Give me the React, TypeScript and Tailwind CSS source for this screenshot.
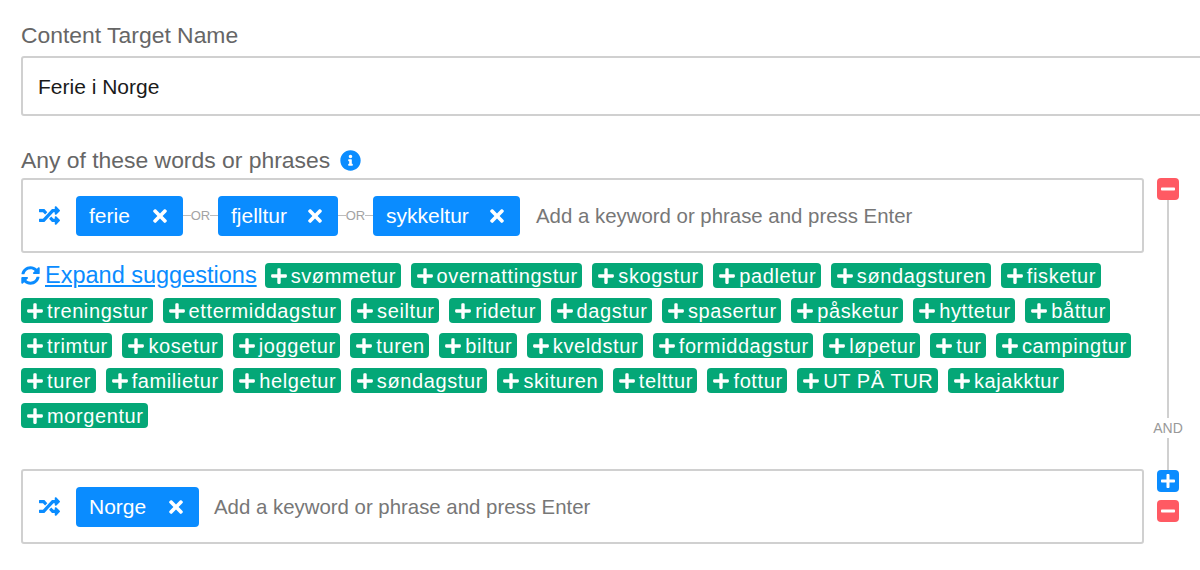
import { FaInfoCircle, FaMinus, FaPlus, FaRandom, FaSyncAlt, FaTimes } from "react-icons/fa";

const rows = [
  "svømmetur", "overnattingstur", "skogstur", "padletur", "søndagsturen", "fisketur",
  "treningstur", "ettermiddagstur", "seiltur", "ridetur", "dagstur", "spasertur", "påsketur", "hyttetur", "båttur",
  "trimtur", "kosetur", "joggetur", "turen", "biltur", "kveldstur", "formiddagstur", "løpetur", "tur", "campingtur",
  "turer", "familietur", "helgetur", "søndagstur", "skituren", "telttur", "fottur", "UT PÅ TUR", "kajakktur",
  "morgentur",
];

function Keyword({ text, width }: { text: string; width: string }) {
  return (
    <span className={`flex h-10 items-center justify-between rounded bg-[#0a8cff] pl-[13px] pr-[13px] text-[21px] text-white ${width}`}>
      {text}
      <FaTimes className="mt-[1px] h-[20px] w-[20px]" />
    </span>
  );
}

function Or() {
  return (
    <span className="flex w-[35px] items-center text-[13px] text-[#a3a3a3]">
      <span className="h-px flex-1 bg-[#bdbdbd]" />
      OR
      <span className="h-px flex-1 bg-[#bdbdbd]" />
    </span>
  );
}

function Suggestion({ text }: { text: string }) {
  return (
    <span className="flex h-[25px] items-center gap-[3px] rounded bg-[#04a777] pl-[5px] pr-[4.5px] text-[20px] tracking-[0.6px] text-white">
      <FaPlus className="h-[18px] w-[18px] shrink-0" />
      {text}
    </span>
  );
}

function RailButton({ kind }: { kind: "plus" | "minus" }) {
  return (
    <span className={`flex h-[22px] w-[22px] items-center justify-center rounded ${kind === "plus" ? "bg-[#0a8cff]" : "bg-[#ff5a63]"}`}>
      {kind === "plus" ? <FaPlus className="h-[16px] w-[16px] text-white" /> : <FaMinus className="h-[16px] w-[16px] text-white" />}
    </span>
  );
}

export default function App() {
  return (
    <div className="h-[570px] w-[1200px] overflow-hidden bg-white pl-[21px] pt-[21px] font-['Liberation_Sans',sans-serif]">
      <label className="block text-[22.9px] leading-[28px] text-[#666]">Content Target Name</label>
      <div className="mt-[7px] flex h-[60px] w-[1200px] items-center rounded-[3px] border-2 border-[#d0d0d0] pl-[15px] pt-[2px] text-[21px] text-[#1a1a1a]">
        Ferie i Norge
      </div>

      <div className="mt-[30px] flex items-center gap-[10px] text-[22.9px] leading-[28px] text-[#666]">
        Any of these words or phrases
        <FaInfoCircle className="h-[21px] w-[21px] text-[#0a8cff]" />
      </div>

      <div className="mt-[4px] flex gap-[13px]">
        <div className="w-[1123px]">
          <div className="flex h-[75px] items-center rounded-[3px] border-2 border-[#d0d0d0] pl-[16px] text-[20.4px] text-[#777]">
            <FaRandom className="mr-[16px] h-[21px] w-[21px] text-[#0a8cff]" />
            <Keyword text="ferie" width="w-[107px]" />
            <Or />
            <Keyword text="fjelltur" width="w-[120px]" />
            <Or />
            <Keyword text="sykkeltur" width="w-[147px]" />
            <span className="ml-4 pt-[2px]">Add a keyword or phrase and press Enter</span>
          </div>

          <div className="mt-[10px] flex flex-wrap gap-x-[10px] gap-y-[10px]">
            <span className="-mr-[2px] flex h-[25px] items-center gap-[5px] text-[23.5px] text-[#0a8cff]">
              <FaSyncAlt className="h-[19px] w-[19px]" />
              <span className="underline">Expand suggestions</span>
            </span>
            {rows.map((s) => (
              <Suggestion key={s} text={s} />
            ))}
          </div>

          <div className="mt-[41px] flex h-[75px] items-center rounded-[3px] border-2 border-[#d0d0d0] pl-[16px] text-[20.4px] text-[#777]">
            <FaRandom className="mr-[16px] h-[21px] w-[21px] text-[#0a8cff]" />
            <Keyword text="Norge" width="w-[123px]" />
            <span className="ml-[15px] pt-[2px]">Add a keyword or phrase and press Enter</span>
          </div>
        </div>

        <div className="flex h-[344px] w-[22px] flex-col items-center">
          <RailButton kind="minus" />
          <span className="w-[2px] flex-1 bg-[#d0d0d0]" />
          <span className="py-[2px] text-[14px] leading-[16px] text-[#999]">AND</span>
          <span className="h-[32px] w-[2px] bg-[#d0d0d0]" />
          <RailButton kind="plus" />
          <span className="mt-2">
            <RailButton kind="minus" />
          </span>
        </div>
      </div>
    </div>
  );
}
